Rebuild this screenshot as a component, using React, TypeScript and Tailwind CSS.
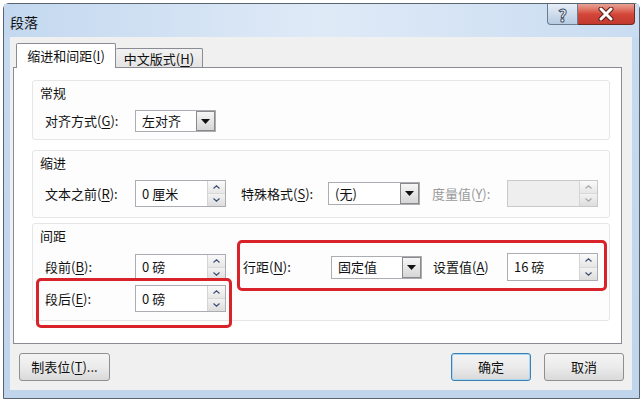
import React from 'react';

const Key = ({ k }: { k: string }) => <span className="underline underline-offset-2">{k}</span>;

const Label = ({ text, k, w, gray = false, colon = true }: { text: string; k: string; w: string; gray?: boolean; colon?: boolean }) => (
  <div className={`${w} shrink-0 ${gray ? 'text-[#9a9a9a]' : 'text-[#111]'}`}>
    {text}(<Key k={k} />){colon ? ':' : ''}
  </div>
);

const ArrowBtn = () => (
  <div className="flex h-full w-[19px] items-center justify-center border border-[#8a8a8a] bg-linear-to-b from-[#f6f6f6] to-[#d6d6d6]">
    <svg width="9" height="5" viewBox="0 0 9 5">
      <path d="M0 0h9L4.5 5z" fill="#111" />
    </svg>
  </div>
);

const Dropdown = ({ value, w, h }: { value: string; w: string; h: string }) => (
  <div className={`flex ${w} ${h} items-stretch border border-[#abadb3] bg-white`}>
    <div className="flex flex-1 items-center pl-1.5">{value}</div>
    <ArrowBtn />
  </div>
);

const Chevron = ({ up, c }: { up: boolean; c: string }) => (
  <svg width="7" height="4" viewBox="0 0 7 4">
    <path d={up ? 'M0.5 3.5L3.5 0.8L6.5 3.5' : 'M0.5 0.5L3.5 3.2L6.5 0.5'} stroke={c} strokeWidth="1.2" fill="none" />
  </svg>
);

const Spin = ({ value, h = 'h-[27px]', disabled = false }: { value: string; h?: string; disabled?: boolean }) => (
  <div className={`flex w-[91px] ${h} items-stretch border ${disabled ? 'border-[#c9c9c9] bg-[#eeeeee]' : 'border-[#abadb3] bg-white'}`}>
    <div className="flex flex-1 items-center pl-1.5">{value}</div>
    <div className="flex w-[18px] flex-col border-l border-[#d4d4d4] bg-[#f4f4f4]">
      <div className="flex flex-1 items-center justify-center border-b border-[#d9d9d9] bg-linear-to-b from-[#fafafa] to-[#e6e6e6]">
        <Chevron up c={disabled ? '#a8a8a8' : '#3c4f73'} />
      </div>
      <div className="flex flex-1 items-center justify-center bg-linear-to-b from-[#f2f2f2] to-[#dddddd]">
        <Chevron up={false} c={disabled ? '#a8a8a8' : '#3c4f73'} />
      </div>
    </div>
  </div>
);

const Group = ({ title, h, children }: { title: string; h: string; children: React.ReactNode }) => (
  <div className={`${h} rounded-[3px] border border-[#e6e6e6] bg-[#fdfdfd] pt-[2px]`}>
    <div className="h-[20px] pl-[7px] leading-[20px] text-[#111]">{title}</div>
    {children}
  </div>
);

const Button = ({ children, w, focused = false }: { children: React.ReactNode; w: string; focused?: boolean }) => (
  <div
    className={`flex h-[28px] ${w} items-center justify-center rounded-[3px] border ${
      focused ? 'border-[#3c7fb1] shadow-[inset_0_0_0_1px_#a8d8f3]' : 'border-[#8e8f8f]'
    } bg-linear-to-b from-[#f4f4f4] via-[#ebebeb] to-[#d9d9d9] text-[#111]`}
  >
    {children}
  </div>
);

export default function App() {
  return (
    <div className="h-[401px] w-[640px] overflow-hidden bg-white font-['Microsoft_YaHei','Noto_Sans_CJK_SC',sans-serif] text-[13px] text-[#111]">
      <div className="relative ml-[3px] mt-[3px] flex h-[396px] w-[637px] flex-col rounded-t-[6px] border border-[#59646f] bg-linear-to-b from-[#c6daf0] to-[#c0d5ec]">
        {/* title bar */}
        <div className="flex h-[33px] shrink-0 items-start justify-between bg-linear-to-r from-[#c3d8ef] via-[#dfeaf7] to-[#c9dcf1]">
          <div className="pl-[6px] pt-[8px] text-[14px]">段落</div>
          <div className="mr-[4px] flex">
            <div className="flex h-[21px] w-[31px] items-center justify-center rounded-bl-[4px] border border-t-0 border-[#6b7c91] bg-linear-to-b from-[#e7eef7] to-[#b7cbe1]">
              <span className="text-[17px] font-bold leading-none text-white [-webkit-text-stroke:1px_#44536a]">?</span>
            </div>
            <div className="flex h-[21px] w-[57px] items-center justify-center rounded-br-[4px] border border-l-0 border-t-0 border-[#6e2b22] bg-linear-to-b from-[#e8a396] via-[#d4473a] to-[#c2392d]">
              <svg width="16" height="14" viewBox="0 0 16 14">
                <path d="M3 2l10 10M13 2L3 12" stroke="#5a1c16" strokeWidth="5" strokeLinecap="round" />
                <path d="M3 2l10 10M13 2L3 12" stroke="#fff" strokeWidth="3" strokeLinecap="round" />
              </svg>
            </div>
          </div>
        </div>

        {/* body */}
        <div className="ml-[6px] flex h-[353px] w-[622px] flex-col bg-[#f0f0f0] pt-[6px]">
          {/* tabs */}
          <div className="flex h-[25px] items-end pl-[6px]">
            <div className="relative z-10 flex h-[25px] w-[100px] items-center justify-center rounded-t-[2px] border border-b-0 border-[#898c95] bg-white">
              缩进和间距(<Key k="I" />)
            </div>
            <div className="flex h-[20px] w-[87px] items-center justify-center rounded-t-[2px] border border-b-0 border-l-0 border-[#898c95] bg-linear-to-b from-[#f2f2f2] to-[#e3e3e3]">
              中文版式(<Key k="H" />)
            </div>
          </div>

          {/* panel */}
          <div className="-mt-px ml-[3px] flex h-[277px] w-[609px] flex-col border border-[#898c95] bg-white pl-[18px] pr-[11px] pt-[12px]">
            <Group title="常规" h="h-[60px]">
              <div className="mt-[7px] flex items-center pl-[12px]">
                <Label text="对齐方式" k="G" w="w-[90px]" />
                <Dropdown value="左对齐" w="w-[81px]" h="h-[22px]" />
              </div>
            </Group>

            <div className="mt-[10px]">
              <Group title="缩进" h="h-[68px]">
                <div className="mt-[7px] flex items-center pl-[12px]">
                  <Label text="文本之前" k="R" w="w-[90px]" />
                  <Spin value="0 厘米" />
                  <div className="ml-[15px]">
                    <Label text="特殊格式" k="S" w="w-[87px]" />
                  </div>
                  <Dropdown value="(无)" w="w-[92px]" h="h-[23px]" />
                  <div className="ml-[12px]">
                    <Label text="度量值" k="Y" w="w-[75px]" gray />
                  </div>
                  <Spin value="" disabled />
                </div>
              </Group>
            </div>

            <div className="mt-[5px]">
              <Group title="间距" h="h-[98px]">
                <div className="mt-[7px] flex items-center pl-[12px]">
                  <Label text="段前" k="B" w="w-[90px]" />
                  <Spin value="0 磅" />
                  <div className="ml-[17px]">
                    <Label text="行距" k="N" w="w-[88px]" />
                  </div>
                  <Dropdown value="固定值" w="w-[91px]" h="h-[23px]" />
                  <div className="ml-[11px]">
                    <Label text="设置值" k="A" w="w-[74px]" colon={false} />
                  </div>
                  <Spin value="16 磅" h="h-[28px]" />
                </div>
                <div className="mt-[4px] flex items-center pl-[12px]">
                  <Label text="段后" k="E" w="w-[90px]" />
                  <Spin value="0 磅" />
                </div>
              </Group>
            </div>
          </div>

          {/* buttons */}
          <div className="mt-[9px] flex items-center pl-[9px] pr-[8px]">
            <Button w="w-[91px]">
              制表位(<Key k="T" />)...
            </Button>
            <div className="flex-1" />
            <Button w="w-[80px]" focused>
              确定
            </Button>
            <div className="w-[13px]" />
            <Button w="w-[80px]">取消</Button>
          </div>
        </div>

        {/* red annotation boxes */}
        <div className="pointer-events-none absolute left-[233px] top-[236px] h-[51px] w-[370px] rounded-[5px] border-[3px] border-[#d9232a]" />
        <div className="pointer-events-none absolute left-[32px] top-[274px] h-[50px] w-[196px] rounded-[5px] border-[3px] border-[#d9232a]" />
      </div>
    </div>
  );
}
